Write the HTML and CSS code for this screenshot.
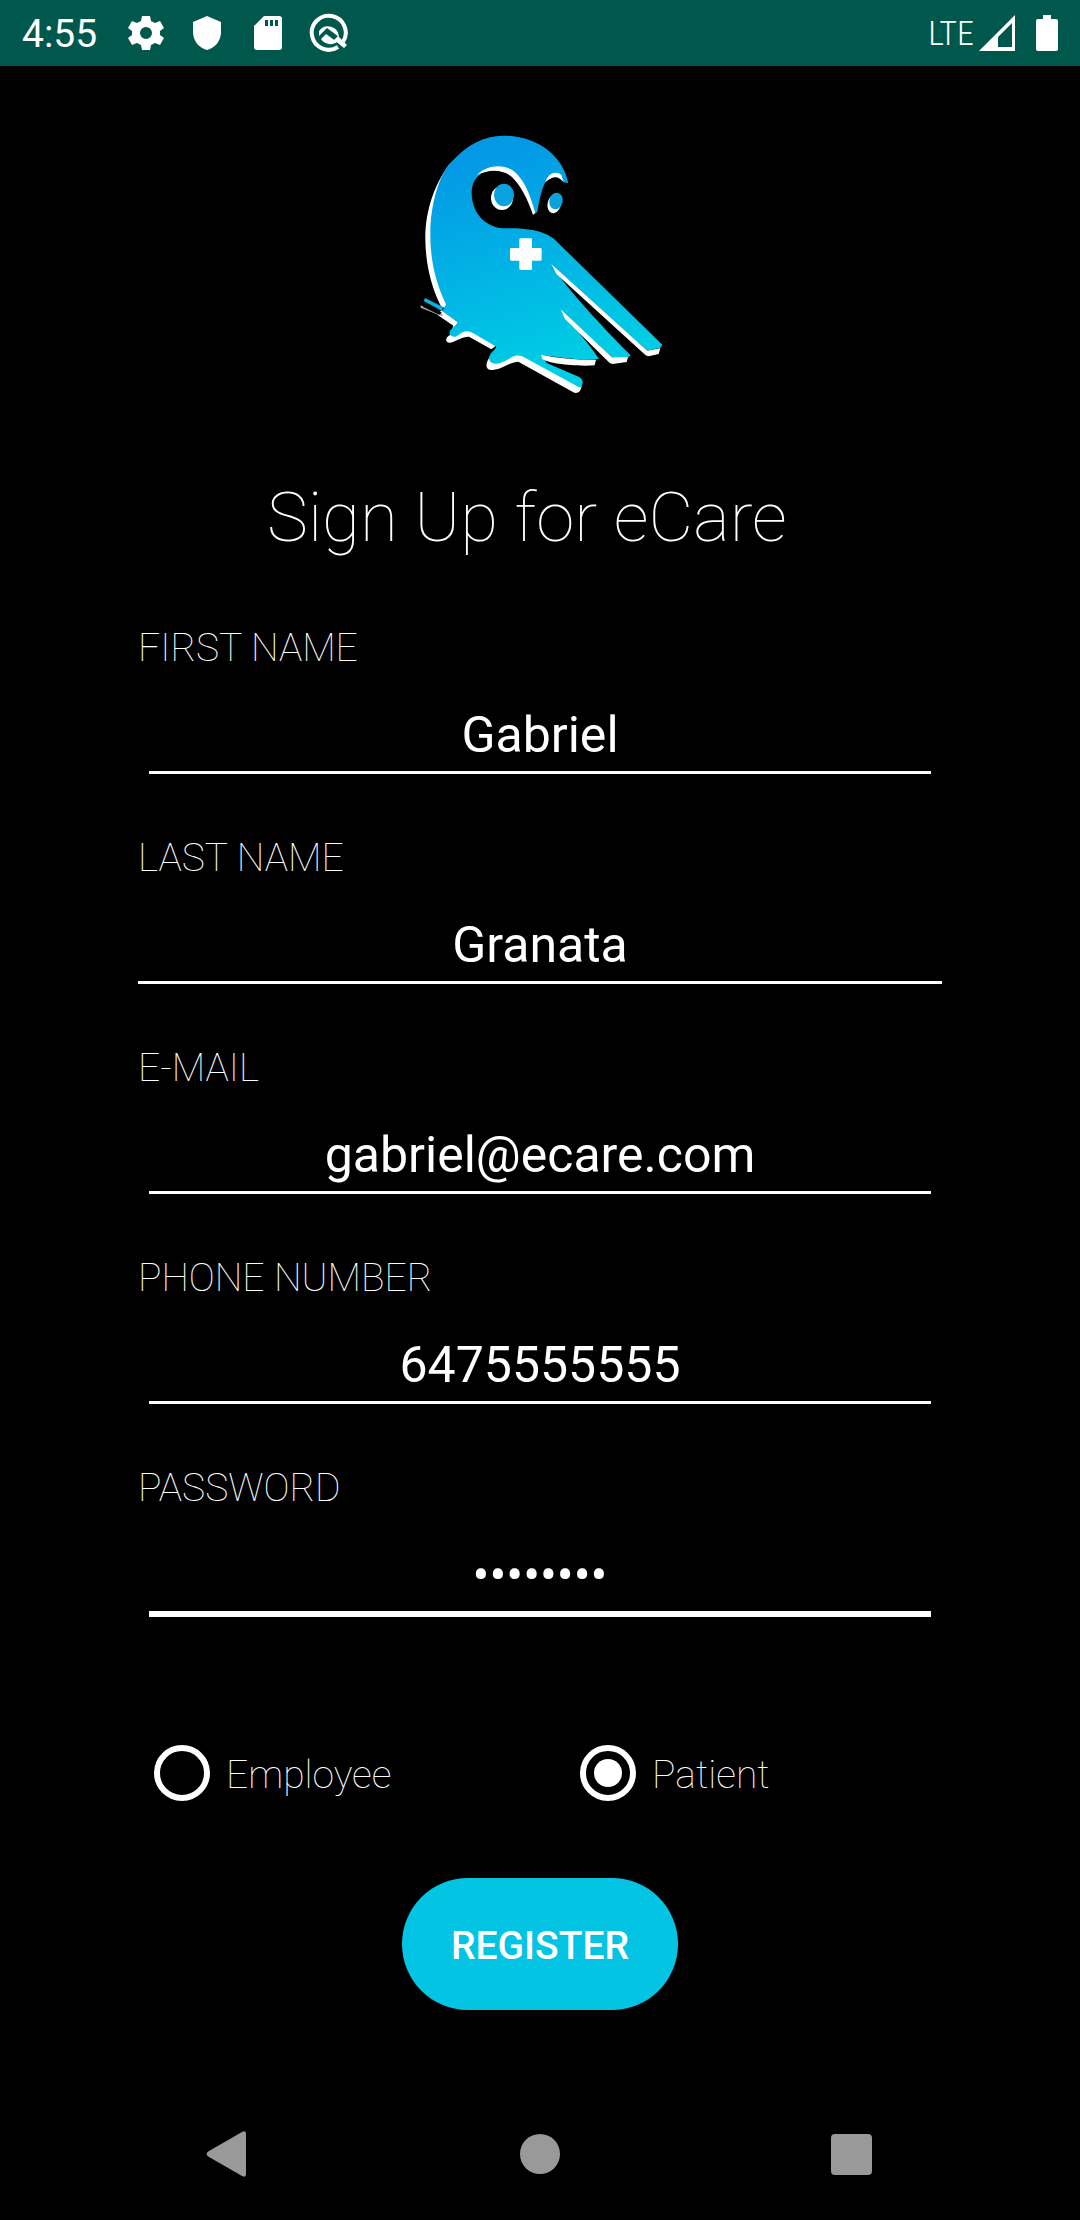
FILE: index.html
```html
<!DOCTYPE html>
<html lang="en">
<head>
<meta charset="utf-8">
<meta name="viewport" content="width=device-width, initial-scale=1">
<title>Sign Up for eCare</title>
<link rel="stylesheet" href="styles.css">
</head>
<body>
<header class="status">
  <span class="clock">4:55</span>
  <svg class="status-icon" viewBox="0 0 40 40" aria-hidden="true"><path fill="#fff" fill-rule="evenodd" d="M16 3h8l1 5 4 2 5-2 4 7-4 3v4l4 3-4 7-5-2-4 2-1 5h-8l-1-5-4-2-5 2-4-7 4-3v-4l-4-3 4-7 5 2 4-2zM20 14a6 6 0 1 0 0 12 6 6 0 0 0 0-12z"/></svg>
  <svg class="status-icon" viewBox="0 0 40 40" aria-hidden="true"><path fill="#fff" d="M20 3l14 6v10c0 9-6 16-14 18C12 35 6 28 6 19V9z"/></svg>
  <svg class="status-icon" viewBox="0 0 40 40" aria-hidden="true"><path fill="#fff" fill-rule="evenodd" d="M16 3h15q3 0 3 3v28q0 3-3 3H9q-3 0-3-3V13zM17 7v6h3V7zM22 7v6h3V7zM27 7v6h3V7z"/></svg>
  <svg class="status-icon" viewBox="0 0 40 40" aria-hidden="true"><path d="M29 34A17 17 0 1 1 34 29" fill="none" stroke="#fff" stroke-width="4"/><path fill="#fff" d="M10 18a11 11 0 0 1 20 6L18 15l-8 8zM12 26l5-5 11 8c-5 4-13 2-16-3zM25 27l4-4 9 9-3 3z"/></svg>
  <span class="network">LTE</span>
  <svg class="signal" viewBox="0 0 36 36" aria-hidden="true"><path fill="#fff" fill-rule="evenodd" d="M36 0v36H0zM33 8L19 22v10h14z"/></svg>
  <svg class="battery" viewBox="0 0 22 36" aria-hidden="true"><path fill="#fff" d="M7 0h8v4h5q2 0 2 2v28q0 2-2 2H2q-2 0-2-2V6q0-2 2-2h5z"/></svg>
</header>

<main class="page">
  <svg class="logo" viewBox="0 0 840 870" role="img" aria-label="eCare owl">
    <defs>
      <linearGradient id="plumage" gradientUnits="userSpaceOnUse" x1="250" y1="110" x2="440" y2="740">
        <stop offset="0" stop-color="#0399e5"/><stop offset="1" stop-color="#00cce4"/>
      </linearGradient>
    </defs>
    <g fill="#fff">
      <path d="M150 130C105 190 75 270 76 360C77 430 93 500 122 557L133 564L141 556L170 400L140 250z"/>
      <path d="M112 584L160 617L150 645C132 655 138 668 148 668C165 668 180 650 207 650L274 688L290 676L172 605L125 570z"/>
      <path d="M270 710C255 730 255 750 275 750C305 750 330 725 355 725L520 817C532 823 542 815 545 798L360 700z"/>
      <path d="M62 556L130 584L126 589L62 563z" fill="#aaa"/>
    </g>
    <path fill="url(#plumage)" d="M310 47C410 47 490 105 506 194L490 340L450 345L787 674L780 684L742 692L453 433C475 470 560 575 692 706L683 713L636 712L483 570C510 610 560 660 597 717C540 723 480 712 425 705L440 729L536 770C553 778 550 795 540 803L375 713C355 702 342 706 325 718C295 736 275 735 268 720C265 700 280 697 289 680L220 640C202 628 190 634 175 645C164 655 152 650 148 640C150 625 168 620 173 606L127 574L138 553C108 490 90 420 91 340C91 260 115 170 150 130C200 75 250 47 310 47z"/>
    <path fill="url(#plumage)" d="M75 534L129 561L126 573L71 543z"/>
    <path d="M62 549L126 578L118 584L70 561z"/>
    <path d="M215 218C215 160 270 137 320 155C365 175 380 230 400 285L412 275C422 220 430 180 455 168L482 172L491 187L507 190L530 390L455 352C425 330 370 323 310 325C250 320 215 273 215 218z"/>
    <g fill="#fff">
      <path d="M230 165C260 135 315 127 348 159C380 190 394 240 406 278L399 284C382 235 362 196 335 170C305 146 266 148 230 165z"/>
      <path d="M436 187C445 157 470 152 484 165L491 187C477 169 461 164 436 187z"/>
      <ellipse cx="306" cy="234" rx="33" ry="36"/><ellipse cx="463" cy="251" rx="20" ry="29" transform="rotate(14 463 251)"/>
      <path d="M453 431L742 692L781 685L776 702L746 709Q738 708 732 701L470 463z"/>
      <path d="M482 568L636 712L684 711L680 726L637 732Q628 730 620 720L495 597z"/>
      <path d="M423 704C475 715 535 720 588 719L584 736C520 740 445 730 427 717z"/>
      <path d="M362 355h30q4 0 4 4v25h25q4 0 4 4v30q0 4-4 4h-25v24q0 4-4 4h-30q-4 0-4-4v-24h-24q-4 0-4-4v-30q0-4 4-4h24v-25q0-4 4-4z"/>
    </g>
    <g fill="#08a2df"><ellipse cx="312" cy="225" rx="30" ry="34"/><ellipse cx="468" cy="243" rx="20" ry="25" transform="rotate(15 468 243)"/></g>
  </svg>

  <h1 class="title">Sign Up for eCare</h1>

  <form class="form">
    <div class="field">
      <label class="label" for="first">FIRST NAME</label>
      <input class="input" id="first" type="text" value="Gabriel">
    </div>
    <div class="field">
      <label class="label" for="last">LAST NAME</label>
      <input class="input input-wide" id="last" type="text" value="Granata">
    </div>
    <div class="field">
      <label class="label" for="email">E-MAIL</label>
      <input class="input" id="email" type="email" value="gabriel@ecare.com">
    </div>
    <div class="field">
      <label class="label" for="phone">PHONE NUMBER</label>
      <input class="input" id="phone" type="tel" value="6475555555">
    </div>
    <div class="field">
      <label class="label" for="password">PASSWORD</label>
      <input class="input input-active" id="password" type="password" value="password">
    </div>
    <div class="roles">
      <label class="role"><input class="radio" type="radio" name="role"><span class="role-name">Employee</span></label>
      <label class="role"><input class="radio" type="radio" name="role" checked><span class="role-name">Patient</span></label>
    </div>
    <button class="register" type="button">REGISTER</button>
  </form>
</main>

<nav class="nav" aria-label="System navigation">
  <button class="nav-button" type="button" aria-label="Back"><svg class="nav-icon" viewBox="0 0 48 48"><path fill="#999" d="M41 4v40q0 4-4 2L4 27q-5-3 0-6L37 2q4-2 4 2z"/></svg></button>
  <button class="nav-button" type="button" aria-label="Home"><svg class="nav-icon" viewBox="0 0 48 48"><circle cx="24" cy="24" r="20" fill="#999"/></svg></button>
  <button class="nav-button" type="button" aria-label="Recents"><svg class="nav-icon" viewBox="0 0 48 48"><rect x="4" y="4" width="41" height="41" rx="4" fill="#999"/></svg></button>
</nav>
</body>
</html>
```
FILE: styles.css
```css
* {
  box-sizing: border-box;
}

body {
  display: flex;
  flex-direction: column;
  min-height: 100vh;
  margin: 0;
  background: #000;
  color: #fff;
  font-family: Roboto, "Liberation Sans", sans-serif;
  font-size: 39px;
}

.status {
  display: flex;
  align-items: center;
  gap: 21px;
  height: 66px;
  padding: 0 22px;
  background: #00574b;
}

.clock {
  margin-right: 8px;
  padding-top: 2px;
  line-height: 48px;
}

.status-icon {
  width: 40px;
  height: 40px;
}

.network {
  margin-left: auto;
  font-family: "Roboto Condensed", Roboto, sans-serif;
  font-size: 34px;
  font-weight: 300;
}

.signal {
  width: 36px;
  height: 36px;
  margin-left: -16px;
}

.battery {
  width: 22px;
  height: 36px;
}

.page {
  display: flex;
  flex-direction: column;
  padding: 54px 138px 0;
}

.logo {
  align-self: center;
  width: 280px;
  height: 290px;
}

.title {
  margin: 68px 26px 66px 0;
  font-size: 69px;
  font-weight: 100;
  line-height: 80px;
  text-align: center;
}

.form {
  display: flex;
  flex-direction: column;
}

.field {
  display: flex;
  flex-direction: column;
  gap: 34px;
  margin-bottom: 60px;
}

.label {
  font-weight: 100;
  line-height: 48px;
}

.input {
  min-width: 0;
  margin: 0 11px;
  padding: 0 0 7px;
  border: 0;
  border-bottom: 3px solid #fff;
  border-radius: 0;
  outline: 0;
  background: transparent;
  color: #fff;
  font-family: inherit;
  font-size: 50px;
  line-height: 58px;
  height: 68px;
  text-align: center;
}

.input-wide {
  margin: 0;
}

.input-active {
  height: 71px;
  border-bottom-width: 6px;
}

.roles {
  display: grid;
  grid-template-columns: 53% 47%;
  margin: 68px 0 77px;
}

.role {
  display: flex;
  align-items: center;
  gap: 16px;
  height: 56px;
  padding-left: 16px;
  font-weight: 100;
}

.role-name {
  padding-top: 4px;
  line-height: 48px;
}

.radio {
  display: grid;
  place-items: center;
  width: 56px;
  height: 56px;
  margin: 0;
  border: 6px solid #fff;
  border-radius: 50%;
  appearance: none;
}

.radio:checked::before {
  width: 28px;
  height: 28px;
  border-radius: 50%;
  background: #fff;
  content: "";
}

.register {
  align-self: center;
  height: 132px;
  padding: 3px 49px 0;
  border: 0;
  border-radius: 66px;
  background: #03c4e3;
  color: #fff;
  font-family: inherit;
  font-size: 39px;
  font-weight: 500;
}

.nav {
  display: flex;
  justify-content: space-between;
  align-items: center;
  height: 132px;
  margin-top: auto;
  padding: 0 205px;
}

.nav-button {
  display: flex;
  padding: 0;
  border: 0;
  background: none;
}

.nav-icon {
  width: 48px;
  height: 48px;
}
```
